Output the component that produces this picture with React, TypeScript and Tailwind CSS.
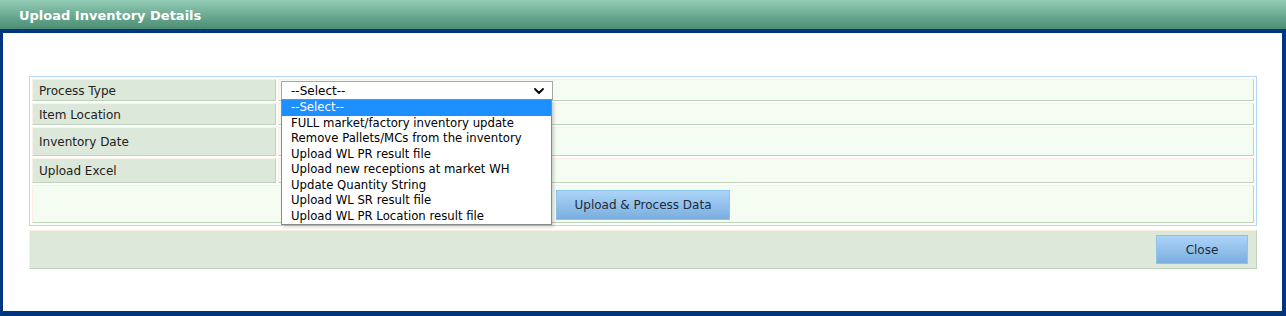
import { ChevronDown } from "lucide-react";

const options = [
  "--Select--",
  "FULL market/factory inventory update",
  "Remove Pallets/MCs from the inventory",
  "Upload WL PR result file",
  "Upload new receptions at market WH",
  "Update Quantity String",
  "Upload WL SR result file",
  "Upload WL PR Location result file",
];

const labelCell =
  "bg-[#dce8d9] border border-t-[#f8f1e6] border-l-[#f8f1e6] border-b-[#bcd5b8] border-r-[#bcd5b8] pl-[6px] pt-[1px] flex items-center";
const valueCell =
  "bg-[#f5fdf3] border border-t-[#fbefe6] border-l-[#fbefe6] border-b-[#bcd5b8] border-r-[#bcd5b8]";
const blueButton =
  "border border-[#8cc3e8] bg-gradient-to-b from-[#acd4f7] to-[#7aaedf] text-[#1d2b3a] text-[12px]";

const App = () => {
  return (
    <div className="w-full h-[316px] flex flex-col bg-white text-[12px] text-[#222] font-['DejaVu_Sans',Verdana,sans-serif]">
      <header className="h-[29px] shrink-0 bg-gradient-to-b from-[#93ccb6] to-[#4a8d72] flex items-center pl-[19px] pt-[2px]">
        <h1 className="text-white font-bold text-[13px]">Upload Inventory Details</h1>
      </header>
      <main className="flex-1 border-t-[4px] border-l-[3px] border-r-[4px] border-b-[5px] border-[#003580] pt-[43px] pl-[26px] pr-[25px]">
        <div className="border border-[#b3daf0] p-[2px] grid grid-cols-[244px_1fr] gap-[2px]">
          <div className={`${labelCell} h-[22px]`}>Process Type</div>
          <div className={`${valueCell} h-[22px] pl-[2px] pt-[1px] relative`}>
            <div className="w-[272px] h-[19px] bg-white border border-[#a6a6a6] flex items-center justify-between pl-[9px] pr-[5px] text-black">
              <span>--Select--</span>
              <ChevronDown size={16} strokeWidth={2.8} />
            </div>
            <ul className="absolute left-[2px] top-[19px] z-10 w-[271px] bg-white border border-[#8a8a8a] shadow-[2px_2px_3px_rgba(0,0,0,0.18)] text-black text-[11.7px]">
              {options.map((option, index) => (
                <li
                  key={index}
                  className={`h-[15.5px] leading-[15.5px] pl-[9px] whitespace-nowrap ${
                    index === 0 ? "bg-[#1e8fff] text-white" : ""
                  }`}
                >
                  {option}
                </li>
              ))}
            </ul>
          </div>
          <div className={`${labelCell} h-[22px]`}>Item Location</div>
          <div className={`${valueCell} h-[22px]`} />
          <div className={`${labelCell} h-[29px]`}>Inventory Date</div>
          <div className={`${valueCell} h-[29px]`} />
          <div className={`${labelCell} h-[25px]`}>Upload Excel</div>
          <div className={`${valueCell} h-[25px]`} />
          <div className={`${valueCell} col-span-2 h-[38px] pl-[523px] pt-[4px]`}>
            <button className={`${blueButton} w-[174px] h-[30px]`}>Upload &amp; Process Data</button>
          </div>
        </div>
        <div className="mt-[4px] h-[39px] bg-[#dde8da] border border-t-[#fbeedb] border-l-[#fbeedb] border-b-[#bcd5b8] border-r-[#bcd5b8] flex items-center justify-end pr-[8px]">
          <button className={`${blueButton} w-[92px] h-[29px]`}>Close</button>
        </div>
      </main>
    </div>
  );
};

export default App;
